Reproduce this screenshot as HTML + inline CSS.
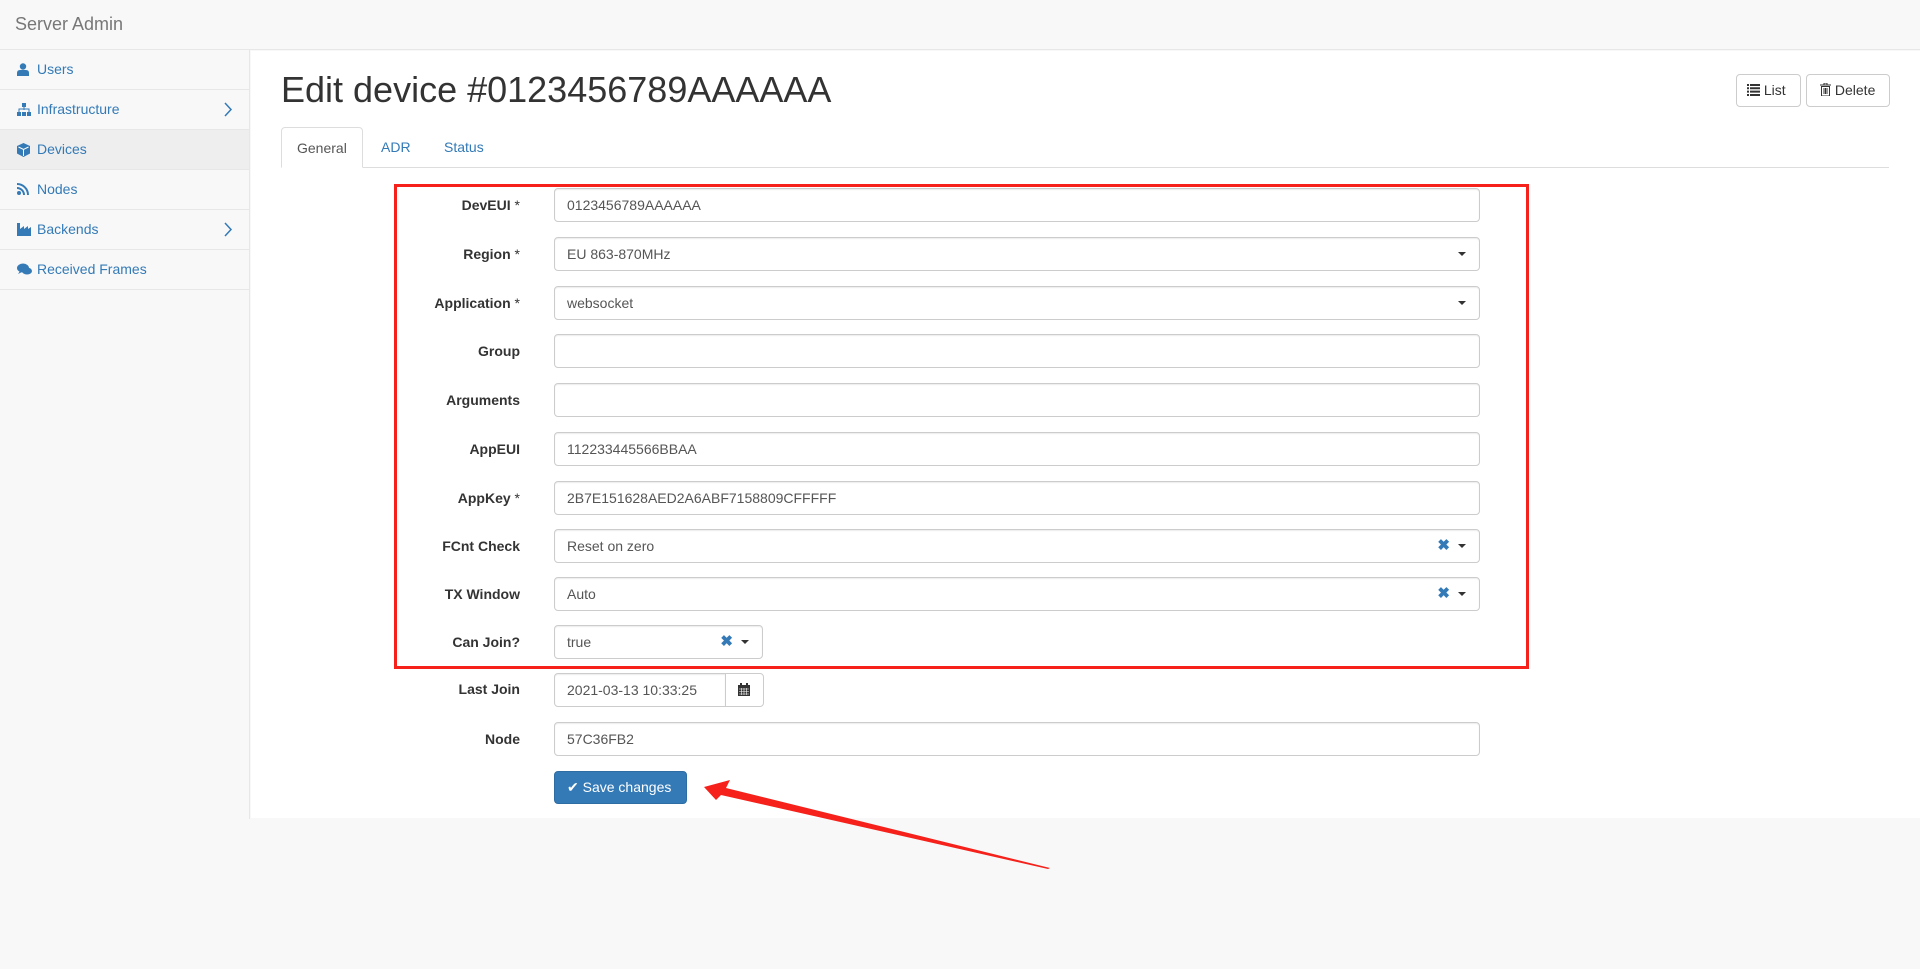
<!DOCTYPE html>
<html><head><meta charset="utf-8"><style>
*{box-sizing:border-box}
body{margin:0;width:1920px;height:969px;background:#f8f8f8;font-family:"Liberation Sans",Arial,sans-serif;font-size:14px;color:#333;position:relative;overflow:hidden}
.hdr{position:absolute;left:0;top:0;width:1920px;height:50px;border-bottom:1px solid #e7e7e7;background:#f8f8f8}
.hdr span{position:absolute;left:15px;top:14px;font-size:18px;color:#777}
.side{position:absolute;left:0;top:50px;width:250px;border-right:1px solid #e7e7e7;height:769px}
.side div{height:40px;border-bottom:1px solid #e7e7e7;color:#337ab7;line-height:39px;padding-left:37px;position:relative}
.side div.act{background:#eee}
.side svg.i{position:absolute;left:17px;top:13px}
.side .chev{position:absolute;left:224px;top:12px}
.main{position:absolute;left:251px;top:51px;width:1669px;height:767px;background:#fff}
h1{position:absolute;left:281px;top:70px;margin:0;font-size:36px;font-weight:500;line-height:40px;color:#333}
.btn{position:absolute;border:1px solid #ccc;border-radius:4px;background:#fff;height:33px;line-height:31px;font-size:14px;color:#333}
.tabs{position:absolute;left:281px;top:167px;width:1608px;border-bottom:1px solid #ddd}
.tab{position:absolute;top:127px;height:41px;line-height:40px;color:#337ab7}
.tab.a{border:1px solid #ddd;border-bottom-color:#fff;border-radius:4px 4px 0 0;background:#fff;color:#555;padding:0 15px;left:281px}
.lbl{position:absolute;right:1400px;font-weight:bold;text-align:right;line-height:34px;white-space:nowrap}
.lbl span{font-weight:normal}
.in{position:absolute;left:554px;width:926px;height:34px;border:1px solid #ccc;border-radius:4px;box-shadow:inset 0 1px 1px rgba(0,0,0,.075);padding-left:12px;line-height:32px;color:#555;background:#fff}
.car{position:absolute;right:13px;top:14px;width:0;height:0;border-left:4px solid transparent;border-right:4px solid transparent;border-top:4px solid #333}
.x{position:absolute;right:29px;top:0;color:#337ab7;font-weight:bold;font-size:15px}
.red{position:absolute;left:394px;top:184px;width:1135px;height:485px;border:3px solid #f5211a}
</style></head><body>
<div class="hdr"><span>Server Admin</span></div>
<div class="side">
<div><svg class="i" width="12" height="13" viewBox="0 0 12 13"><circle cx="6" cy="3.5" r="3.2" fill="#337ab7"/><path d="M0 13V10q0-3 3-3h6q3 0 3 3v3z" fill="#337ab7"/></svg>Users</div>
<div><svg class="i" width="14" height="13" viewBox="0 0 14 13"><rect x="5" y="0" width="4" height="4" fill="#337ab7"/><path d="M7 4v3M2 9V6h10v3" stroke="#337ab7" fill="none"/><rect x="0" y="9" width="4" height="4" fill="#337ab7"/><rect x="5" y="9" width="4" height="4" fill="#337ab7"/><rect x="10" y="9" width="4" height="4" fill="#337ab7"/></svg>Infrastructure<svg class="chev" width="9" height="15" viewBox="0 0 9 15"><path d="M1 1l6 6.5L1 14" stroke="#337ab7" stroke-width="1.5" fill="none"/></svg></div>
<div class="act"><svg class="i" width="13" height="14" viewBox="0 0 13 14"><path d="M6.5 0L13 3v7.5L6.5 14 0 10.5V3z" fill="#337ab7"/><path d="M1.5 4l5 2.5 5-2.5M6.5 6.5V13" stroke="#fff" fill="none"/></svg>Devices</div>
<div><svg class="i" width="12" height="12" viewBox="0 0 12 12"><circle cx="2" cy="10" r="2" fill="#337ab7"/><path d="M0 5a7 7 0 0 1 7 7M0 1a11 11 0 0 1 11 11" stroke="#337ab7" stroke-width="2" fill="none"/></svg>Nodes</div>
<div><svg class="i" width="14" height="13" viewBox="0 0 14 13"><path d="M0 0h3v6l4-3v3l4-3v3l3-2v9H0z" fill="#337ab7"/></svg>Backends<svg class="chev" width="9" height="15" viewBox="0 0 9 15"><path d="M1 1l6 6.5L1 14" stroke="#337ab7" stroke-width="1.5" fill="none"/></svg></div>
<div><svg class="i" width="15" height="13" viewBox="0 0 15 13"><ellipse cx="6" cy="5" rx="6" ry="4.5" fill="#337ab7"/><ellipse cx="10" cy="8" rx="5" ry="3.5" fill="#337ab7"/><path d="M1 11l2-3 2 1z" fill="#337ab7"/></svg>Received Frames</div>
</div>
<div class="main"></div>
<h1>Edit device #0123456789AAAAAA</h1>
<div class="btn" style="left:1736px;top:74px;width:65px;padding-left:10px"><svg width="13" height="12" viewBox="0 0 13 12" style="vertical-align:-1px"><path d="M0 0h2v2H0zM3 0h10v2H3zM0 3.3h2v2H0zM3 3.3h10v2H3zM0 6.6h2v2H0zM3 6.6h10v2H3zM0 10h2v2H0zM3 10h10v2H3z" fill="#333"/></svg> List</div>
<div class="btn" style="left:1806px;top:74px;width:84px;padding-left:13px"><svg width="11" height="13" viewBox="0 0 11 13" style="vertical-align:-1px"><path d="M0 2h11M4 2V0h3v2M1.5 3.5h8V13h-8z" stroke="#333" fill="none"/><path d="M4 5v6M5.5 5v6M7 5v6" stroke="#333"/></svg> Delete</div>
<div class="tabs"></div>
<div class="tab a" style="width:82px">General</div>
<div class="tab" style="left:381px">ADR</div>
<div class="tab" style="left:444px">Status</div>

<div class="lbl" style="top:188px">DevEUI <span>*</span></div><div class="in" style="top:188px">0123456789AAAAAA</div>
<div class="lbl" style="top:237px">Region <span>*</span></div><div class="in" style="top:237px">EU 863-870MHz<i class="car"></i></div>
<div class="lbl" style="top:286px">Application <span>*</span></div><div class="in" style="top:286px">websocket<i class="car"></i></div>
<div class="lbl" style="top:334px">Group</div><div class="in" style="top:334px"></div>
<div class="lbl" style="top:383px">Arguments</div><div class="in" style="top:383px"></div>
<div class="lbl" style="top:432px">AppEUI</div><div class="in" style="top:432px">112233445566BBAA</div>
<div class="lbl" style="top:481px">AppKey <span>*</span></div><div class="in" style="top:481px">2B7E151628AED2A6ABF7158809CFFFFF</div>
<div class="lbl" style="top:529px">FCnt Check</div><div class="in" style="top:529px">Reset on zero<b class="x">✖</b><i class="car"></i></div>
<div class="lbl" style="top:577px">TX Window</div><div class="in" style="top:577px">Auto<b class="x">✖</b><i class="car"></i></div>
<div class="lbl" style="top:625px">Can Join?</div><div class="in" style="top:625px;width:209px">true<b class="x">✖</b><i class="car"></i></div>
<div class="lbl" style="top:672px">Last Join</div><div class="in" style="top:673px;width:172px;border-radius:4px 0 0 4px">2021-03-13 10:33:25</div>
<div class="in" style="top:673px;left:725px;width:39px;border-radius:0 4px 4px 0;background:#fff;box-shadow:none"><svg width="12" height="13" viewBox="0 0 12 13" style="position:absolute;left:12px;top:9px"><rect x="0" y="2" width="12" height="11" fill="#333"/><rect x="2" y="0" width="2" height="3" fill="#333"/><rect x="8" y="0" width="2" height="3" fill="#333"/><path d="M1 6h10M1 8.5h10M1 11h10M3.5 5v7M6 5v7M8.5 5v7" stroke="#fff" stroke-width=".6"/></svg></div>
<div class="lbl" style="top:722px">Node</div><div class="in" style="top:722px">57C36FB2</div>
<div style="position:absolute;left:554px;top:771px;width:133px;height:33px;background:#337ab7;border:1px solid #2e6da4;border-radius:4px;color:#fff;line-height:31px;padding-left:12px">✔ Save changes</div>
<div class="red"></div>
<svg width="1920" height="969" style="position:absolute;left:0;top:0" viewBox="0 0 1920 969"><path d="M704 787L730 780L726 788L1050 868L1048 869L721 795L716 800Z" fill="#f5211a"/></svg>
</body></html>
